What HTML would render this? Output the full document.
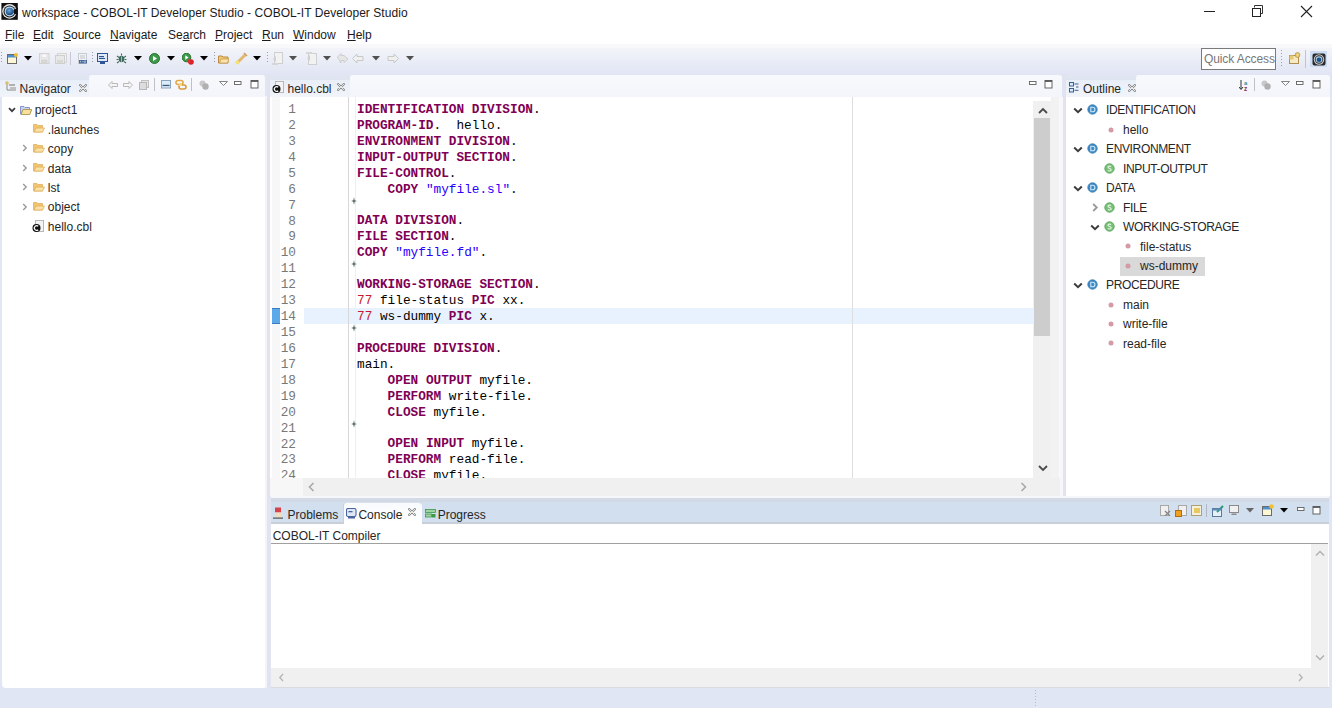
<!DOCTYPE html>
<html><head><meta charset="utf-8">
<style>
*{margin:0;padding:0;box-sizing:border-box}
html,body{width:1332px;height:708px;overflow:hidden}
body{position:relative;background:#e1e6f4;font-family:"Liberation Sans",sans-serif;font-size:12px;color:#1e1e1e}
.a{position:absolute;display:block}
.t{position:absolute;white-space:pre;line-height:16px}
.m{font-family:"Liberation Mono",monospace;font-size:12.75px}
.kw{color:#7f0055;font-weight:bold}
.num{color:#c41a30}
.str{color:#2a00ff}
.ln{color:#787878}
</style></head><body>
<div class="a" style="left:0px;top:0px;width:1332px;height:24px;background:#fff"></div>
<svg class="a" style="left:1px;top:3px" width="17" height="17" viewBox="0 0 17 17"><defs><radialGradient id="bl" cx="0.45" cy="0.35" r="0.7"><stop offset="0" stop-color="#6fa8dc"/><stop offset="1" stop-color="#0f3d70"/></radialGradient></defs><rect x="0.4" y="0" width="16.4" height="16.8" fill="#111"/><circle cx="8.5" cy="8.4" r="7.3" fill="#e6e6e6"/><circle cx="8.5" cy="8.4" r="6" fill="#1a1a1a"/><circle cx="8.6" cy="8.4" r="5" fill="#b9dcf5"/><circle cx="8.6" cy="8.5" r="3.8" fill="url(#bl)"/><path d="M16.8 4.5 L12.5 7 V10 L16.8 12.5 Z" fill="#111"/></svg>
<div class="t" style="left:22px;top:5.04px;font-size:12px;color:#1a1a1a;font-family:'Liberation Sans';font-weight:normal;letter-spacing:0.05px">workspace - COBOL-IT Developer Studio - COBOL-IT Developer Studio</div>
<div class="a" style="left:1204px;top:11px;width:11px;height:1px;background:#222"></div>
<svg class="a" style="left:1250px;top:5px" width="14" height="13" viewBox="0 0 14 13"><path d="M4.5 2.5 V0.5 H12.5 V8.5 H10.5" fill="none" stroke="#333" stroke-width="1"/><rect x="2.5" y="3.5" width="8" height="8" fill="#fff" stroke="#222" stroke-width="1"/></svg>
<svg class="a" style="left:1300px;top:5px" width="13" height="13" viewBox="0 0 13 13"><path d="M1 1 L12 12 M12 1 L1 12" stroke="#222" stroke-width="1.1"/></svg>
<div class="a" style="left:0px;top:24px;width:1332px;height:20px;background:#fff"></div>
<div class="t" style="left:5px;top:27.04px;font-size:12px;color:#1a1a1a;font-family:'Liberation Sans';font-weight:normal;"><span style="text-decoration:underline">F</span>ile</div>
<div class="t" style="left:33px;top:27.04px;font-size:12px;color:#1a1a1a;font-family:'Liberation Sans';font-weight:normal;"><span style="text-decoration:underline">E</span>dit</div>
<div class="t" style="left:63px;top:27.04px;font-size:12px;color:#1a1a1a;font-family:'Liberation Sans';font-weight:normal;"><span style="text-decoration:underline">S</span>ource</div>
<div class="t" style="left:110px;top:27.04px;font-size:12px;color:#1a1a1a;font-family:'Liberation Sans';font-weight:normal;"><span style="text-decoration:underline">N</span>avigate</div>
<div class="t" style="left:168px;top:27.04px;font-size:12px;color:#1a1a1a;font-family:'Liberation Sans';font-weight:normal;">Se<span style="text-decoration:underline">a</span>rch</div>
<div class="t" style="left:215px;top:27.04px;font-size:12px;color:#1a1a1a;font-family:'Liberation Sans';font-weight:normal;"><span style="text-decoration:underline">P</span>roject</div>
<div class="t" style="left:262px;top:27.04px;font-size:12px;color:#1a1a1a;font-family:'Liberation Sans';font-weight:normal;"><span style="text-decoration:underline">R</span>un</div>
<div class="t" style="left:293px;top:27.04px;font-size:12px;color:#1a1a1a;font-family:'Liberation Sans';font-weight:normal;"><span style="text-decoration:underline">W</span>indow</div>
<div class="t" style="left:347px;top:27.04px;font-size:12px;color:#1a1a1a;font-family:'Liberation Sans';font-weight:normal;"><span style="text-decoration:underline">H</span>elp</div>
<div class="a" style="left:0px;top:44px;width:1332px;height:4px;background:#f8f8fb"></div>
<div class="a" style="left:0px;top:48px;width:1332px;height:32px;background:linear-gradient(#f2f4f9,#e2e6f4 80%,#dfe4f1)"></div>
<div class="a" style="left:1px;top:52px;width:1px;height:12px;background:repeating-linear-gradient(#9aa0b0 0 1px,transparent 1px 3px)"></div>
<svg class="a" style="left:7px;top:53px" width="11" height="11" viewBox="0 0 11 11"><rect x="0.5" y="1.5" width="9" height="9" fill="#fdf7d6" stroke="#6b6b6b"/><rect x="1" y="2" width="8" height="2.5" fill="#4d8fd0"/><circle cx="9" cy="2" r="2" fill="#f0c030"/></svg>
<svg class="a" style="left:24px;top:56px" width="8" height="5" viewBox="0 0 8 5"><path d="M0 0 H8 L4.0 4.5 Z" fill="#000"/></svg>
<svg class="a" style="left:39px;top:53px" width="11" height="11" viewBox="0 0 11 11"><rect x="0.5" y="0.5" width="9.5" height="10" fill="#ebebeb" stroke="#d2d2d2"/><rect x="2.5" y="1" width="5.5" height="3.5" fill="#f8f8f8" stroke="#dadada" stroke-width="0.6"/><rect x="2" y="6.5" width="6.5" height="3.5" fill="#d6d6d2"/></svg>
<svg class="a" style="left:55px;top:53px" width="12" height="11" viewBox="0 0 12 11"><rect x="2.5" y="0.5" width="9" height="9" fill="#efefef" stroke="#d4d4d4"/><rect x="0.5" y="2.5" width="9" height="8" fill="#e8e8e8" stroke="#cfcfcf"/><rect x="2" y="7" width="6" height="3" fill="#d8d8d4"/></svg>
<div class="a" style="left:70px;top:52px;width:1px;height:13px;background:#c5c8d2"></div>
<svg class="a" style="left:78px;top:53px" width="10" height="11" viewBox="0 0 10 11"><rect x="0.5" y="0.5" width="8" height="10" fill="#f2f2f4" stroke="#c8ccd4"/><path d="M2 3 H7 M2 5 H7" stroke="#b0b8c0" stroke-width="0.8"/><rect x="1" y="7" width="8" height="3.5" fill="#4a6a9a"/><path d="M2 8.7 H3 M4.5 8.7 H5.5 M7 7.5 V10" stroke="#dfe8f4" stroke-width="0.9"/></svg>
<div class="a" style="left:92px;top:52px;width:1px;height:12px;background:repeating-linear-gradient(#9aa0b0 0 1px,transparent 1px 3px)"></div>
<svg class="a" style="left:97px;top:53px" width="11" height="11" viewBox="0 0 11 11"><rect x="0.5" y="0.5" width="10" height="8" fill="#dfe9f7" stroke="#2f5597"/><rect x="2" y="3" width="5" height="1.2" fill="#2f5597"/><rect x="2" y="5" width="6" height="1" fill="#2f5597"/><rect x="3" y="9" width="5" height="2" fill="#2f5597"/></svg>
<svg class="a" style="left:116px;top:53px" width="11" height="11" viewBox="0 0 11 11"><ellipse cx="5.5" cy="6" rx="2.8" ry="3.3" fill="#3f6a5c"/><path d="M5.5 0.5 V2.5 M1 3 L3 4.5 M10 3 L8 4.5 M0.5 6.5 H2.5 M8.5 6.5 H10.5 M1 10 L3 8.5 M10 10 L8 8.5" stroke="#466e60" stroke-width="1.1"/><path d="M5.5 3.5 V9" stroke="#b8d4c8" stroke-width="0.8"/></svg>
<svg class="a" style="left:134px;top:56px" width="8" height="5" viewBox="0 0 8 5"><path d="M0 0 H8 L4.0 4.5 Z" fill="#000"/></svg>
<svg class="a" style="left:149px;top:53px" width="11" height="11" viewBox="0 0 11 11"><circle cx="5.5" cy="5.5" r="5" fill="#3d9a4a" stroke="#2a6e33"/><path d="M4 3 L8 5.5 L4 8 Z" fill="#fff"/></svg>
<svg class="a" style="left:167px;top:56px" width="8" height="5" viewBox="0 0 8 5"><path d="M0 0 H8 L4.0 4.5 Z" fill="#000"/></svg>
<svg class="a" style="left:182px;top:53px" width="12" height="12" viewBox="0 0 12 12"><circle cx="4.5" cy="4.5" r="4.3" fill="#3d9a4a" stroke="#2a6e33"/><path d="M3.3 2.3 L6.5 4.5 L3.3 6.7 Z" fill="#fff"/><circle cx="9" cy="9" r="2.8" fill="#d8232a"/><rect x="5.5" y="6.5" width="3" height="3" fill="#e03030"/></svg>
<svg class="a" style="left:200px;top:56px" width="8" height="5" viewBox="0 0 8 5"><path d="M0 0 H8 L4.0 4.5 Z" fill="#000"/></svg>
<div class="a" style="left:214px;top:52px;width:1px;height:12px;background:repeating-linear-gradient(#9aa0b0 0 1px,transparent 1px 3px)"></div>
<svg class="a" style="left:218px;top:53px" width="11" height="11" viewBox="0 0 11 11"><path d="M0.5 3 H4 L5 4 H10 V10 H0.5 Z" fill="#f3c77a" stroke="#b98a3a"/><path d="M1.5 10 L3 6 H11 L9.5 10 Z" fill="#fbe3ad" stroke="#c89a4a" stroke-width="0.8"/></svg>
<svg class="a" style="left:235px;top:52px" width="13" height="13" viewBox="0 0 13 13"><path d="M2 11 L10 3" stroke="#e2b870" stroke-width="3"/><circle cx="2.5" cy="10.5" r="2" fill="#f4e07a"/><path d="M9 1 L12 4" stroke="#c89a6a" stroke-width="1.5"/></svg>
<svg class="a" style="left:253px;top:56px" width="8" height="5" viewBox="0 0 8 5"><path d="M0 0 H8 L4.0 4.5 Z" fill="#000"/></svg>
<div class="a" style="left:267px;top:52px;width:1px;height:12px;background:repeating-linear-gradient(#9aa0b0 0 1px,transparent 1px 3px)"></div>
<svg class="a" style="left:272px;top:52px" width="11" height="13" viewBox="0 0 11 13"><rect x="2.5" y="0.5" width="8" height="11" fill="#f2f2f2" stroke="#cfcfcf"/><path d="M1 7 L4 4 L4 10 Z" fill="#d0d0d0"/><rect x="0" y="11" width="6" height="2" fill="#d6d6d6"/></svg>
<svg class="a" style="left:289px;top:56px" width="8" height="5" viewBox="0 0 8 5"><path d="M0 0 H8 L4.0 4.5 Z" fill="#505050"/></svg>
<svg class="a" style="left:306px;top:52px" width="11" height="13" viewBox="0 0 11 13"><rect x="2.5" y="1.5" width="8" height="11" fill="#f2f2f2" stroke="#cfcfcf"/><path d="M1 6 L4 9 L4 3 Z" fill="#d0d0d0"/><rect x="0" y="0" width="6" height="2" fill="#d6d6d6"/></svg>
<svg class="a" style="left:323px;top:56px" width="8" height="5" viewBox="0 0 8 5"><path d="M0 0 H8 L4.0 4.5 Z" fill="#505050"/></svg>
<svg class="a" style="left:337px;top:53px" width="12" height="11" viewBox="0 0 12 11"><path d="M0.5 4 L4 0.5 V2.5 H7 L11 6 L7 9.5 V7.5 H4 V10 Z" fill="#e6e6e6" stroke="#cdcdcd"/></svg>
<svg class="a" style="left:352px;top:53px" width="12" height="11" viewBox="0 0 12 11"><path d="M0.5 5.5 L5 1 V3.5 H11 V7.5 H5 V10 Z" fill="#f0f0f0" stroke="#c8c8c8"/></svg>
<svg class="a" style="left:372px;top:56px" width="8" height="5" viewBox="0 0 8 5"><path d="M0 0 H8 L4.0 4.5 Z" fill="#505050"/></svg>
<svg class="a" style="left:387px;top:53px" width="12" height="11" viewBox="0 0 12 11"><path d="M11.5 5.5 L7 1 V3.5 H1 V7.5 H7 V10 Z" fill="#f0f0f0" stroke="#c8c8c8"/></svg>
<svg class="a" style="left:406px;top:56px" width="8" height="5" viewBox="0 0 8 5"><path d="M0 0 H8 L4.0 4.5 Z" fill="#505050"/></svg>
<div class="a" style="left:1201px;top:48px;width:75px;height:22px;background:#fff;border:1px solid #7a7a7a"></div>
<div class="t" style="left:1204px;top:51.34px;font-size:12px;color:#787878;font-family:'Liberation Sans';font-weight:normal;letter-spacing:-0.1px">Quick Access</div>
<div class="a" style="left:1281px;top:50px;width:1px;height:18px;background:repeating-linear-gradient(#9aa0b0 0 1px,transparent 1px 3px)"></div>
<svg class="a" style="left:1289px;top:52px" width="12" height="12" viewBox="0 0 12 12"><rect x="0.5" y="3.5" width="9" height="8" fill="#f6eac2" stroke="#b09050"/><rect x="0.5" y="3.5" width="4" height="4" fill="#e8c870"/><circle cx="8.5" cy="3" r="2.4" fill="#f0d070" stroke="#b09050" stroke-width="0.8"/></svg>
<div class="a" style="left:1305px;top:50px;width:1px;height:18px;background:#c0c4d0"></div>
<div class="a" style="left:1310px;top:51px;width:17px;height:16px;background:#cddcf2"></div>
<svg class="a" style="left:1311.5px;top:52.5px" width="14" height="13" viewBox="0 0 14 13"><rect x="0.5" y="0.5" width="13" height="12" rx="2" fill="#2a2a2a"/><circle cx="7" cy="6.5" r="5.2" fill="#cfcfcf"/><circle cx="7" cy="6.5" r="4.2" fill="#333"/><circle cx="7" cy="6.5" r="3.3" fill="#a8cdea"/><circle cx="7" cy="6.7" r="2.3" fill="#1d4f86"/></svg>
<div class="a" style="left:2px;top:96px;width:265px;height:592px;background:#fff;border-radius:0 0 4px 4px"></div>
<div class="a" style="left:89px;top:74.5px;width:176px;height:22px;background:linear-gradient(#f7f9fc,#f3f5fb);border-radius:3px 3px 0 0"></div>
<div class="a" style="left:0px;top:79.5px;width:89px;height:17px;background:linear-gradient(#e8eef8,#f1f4fa)"></div>
<svg class="a" style="left:5px;top:81px" width="12" height="11" viewBox="0 0 12 11"><path d="M2 1 V9 H11" fill="none" stroke="#8a8a8a" stroke-width="1"/><rect x="4" y="3" width="6" height="2" fill="#b0b0b0"/><rect x="5" y="6" width="6" height="2" fill="#c0c0c0"/><circle cx="2" cy="2" r="1.8" fill="#d9c06a"/></svg>
<div class="t" style="left:19.5px;top:80.84px;font-size:12px;color:#262626;font-family:'Liberation Sans';font-weight:normal;">Navigator</div>
<svg class="a" style="left:79px;top:83.5px" width="8" height="8" viewBox="0 0 8 8"><path d="M1 1 L7 7 M7 1 L1 7" stroke="#8a8a8a" stroke-width="2.2" stroke-linecap="round"/><path d="M1 1 L7 7 M7 1 L1 7" stroke="#fff" stroke-width="0.8" stroke-linecap="round"/></svg>
<svg class="a" style="left:108px;top:81px" width="10" height="8" viewBox="0 0 10 8"><path d="M0.5 4 L4 0.5 V2.5 H9.5 V5.5 H4 V7.5 Z" fill="#f4f4f4" stroke="#b9b9b9"/></svg>
<svg class="a" style="left:123px;top:81px" width="10" height="8" viewBox="0 0 10 8"><path d="M9.5 4 L6 0.5 V2.5 H0.5 V5.5 H6 V7.5 Z" fill="#f4f4f4" stroke="#b9b9b9"/></svg>
<svg class="a" style="left:139px;top:80px" width="10" height="10" viewBox="0 0 10 10"><rect x="2.5" y="0.5" width="7" height="7" fill="#e6e6e6" stroke="#c0c0c0"/><rect x="0.5" y="2.5" width="7" height="7" fill="#dcdcdc" stroke="#b8b8b8"/></svg>
<div class="a" style="left:154px;top:78px;width:1px;height:13px;background:#c0c0c8"></div>
<svg class="a" style="left:161px;top:80px" width="10" height="9" viewBox="0 0 10 9"><rect x="0.5" y="0.5" width="9" height="7.5" fill="#dcecf8" stroke="#8aa4c0"/><rect x="1.5" y="4.8" width="7" height="1.3" fill="#3a5a7a"/></svg>
<svg class="a" style="left:175px;top:79px" width="12" height="12" viewBox="0 0 12 12"><rect x="1" y="1.5" width="7" height="4" rx="2" fill="none" stroke="#e2a84a" stroke-width="1.6"/><rect x="4" y="6" width="7" height="4" rx="2" fill="none" stroke="#d99a3a" stroke-width="1.6"/><rect x="4" y="4" width="3" height="3" fill="#f4d880"/></svg>
<div class="a" style="left:191px;top:78px;width:1px;height:13px;background:#c0c0c8"></div>
<svg class="a" style="left:199px;top:80px" width="10" height="10" viewBox="0 0 10 10"><circle cx="3.5" cy="3.5" r="3" fill="#c8c8c8"/><circle cx="6.5" cy="6.5" r="3.2" fill="#b0b0b0"/></svg>
<svg class="a" style="left:219px;top:81px" width="9" height="5" viewBox="0 0 9 5"><path d="M0.5 0.5 H8.5 L4.5 4.5 Z" fill="#fff" stroke="#777" stroke-width="0.9"/></svg>
<svg class="a" style="left:234px;top:80.5px" width="9" height="5" viewBox="0 0 9 5"><rect x="0.5" y="0.5" width="6.5" height="3" fill="#fff" stroke="#606060" stroke-width="0.9"/></svg>
<svg class="a" style="left:250px;top:80px" width="9" height="9" viewBox="0 0 9 9"><rect x="1" y="0.5" width="7" height="7.5" fill="#fff" stroke="#555" stroke-width="0.9"/><rect x="1" y="0.5" width="7" height="1.4" fill="#555"/></svg>
<svg class="a" style="left:8px;top:106.9px" width="8" height="6" viewBox="0 0 8 6"><path d="M1 1.2 L4 4.2 L7 1.2" fill="none" stroke="#3a3a3a" stroke-width="1.7"/></svg>
<svg class="a" style="left:20px;top:104.9px" width="12" height="10" viewBox="0 0 12 10"><path d="M0.5 1.5 H4 L5 2.5 H9.5 V9 H0.5 Z" fill="#c9d2ef" stroke="#6f7fb8" stroke-width="0.8"/><path d="M1 9 L3 5 H11.5 L9.5 9 Z" fill="#e6ecfa" stroke="#6f7fb8" stroke-width="0.8"/></svg>
<svg class="a" style="left:20px;top:104.9px" width="12" height="10" viewBox="0 0 12 10"><path d="M1.2 9.5 L3 4.5 H11.5 L9.8 9.5 Z" fill="#f6e29a" stroke="#b49a50" stroke-width="0.9"/></svg>
<div class="t" style="left:34.7px;top:102.24px;font-size:12px;color:#262626;font-family:'Liberation Sans';font-weight:normal;">project1</div>
<svg class="a" style="left:33px;top:123.32px" width="12" height="10" viewBox="0 0 12 10"><path d="M0.5 1.5 H4 L5 2.5 H9.5 V9 H0.5 Z" fill="#f2c46e" stroke="#e0b060" stroke-width="0.8"/><path d="M1 9 L3 5 H11.5 L9.5 9 Z" fill="#fae2a6" stroke="#e0b060" stroke-width="0.8"/></svg>
<div class="t" style="left:47.8px;top:121.66px;font-size:12px;color:#262626;font-family:'Liberation Sans';font-weight:normal;">.launches</div>
<svg class="a" style="left:22px;top:144.24px" width="6" height="8" viewBox="0 0 6 8"><path d="M1.2 1 L4.2 4 L1.2 7" fill="none" stroke="#9a9a9a" stroke-width="1.4"/></svg>
<svg class="a" style="left:33px;top:142.74px" width="12" height="10" viewBox="0 0 12 10"><path d="M0.5 1.5 H4 L5 2.5 H9.5 V9 H0.5 Z" fill="#f2c46e" stroke="#e0b060" stroke-width="0.8"/><path d="M1 9 L3 5 H11.5 L9.5 9 Z" fill="#fae2a6" stroke="#e0b060" stroke-width="0.8"/></svg>
<div class="t" style="left:47.8px;top:141.08px;font-size:12px;color:#262626;font-family:'Liberation Sans';font-weight:normal;">copy</div>
<svg class="a" style="left:22px;top:163.66000000000003px" width="6" height="8" viewBox="0 0 6 8"><path d="M1.2 1 L4.2 4 L1.2 7" fill="none" stroke="#9a9a9a" stroke-width="1.4"/></svg>
<svg class="a" style="left:33px;top:162.16000000000003px" width="12" height="10" viewBox="0 0 12 10"><path d="M0.5 1.5 H4 L5 2.5 H9.5 V9 H0.5 Z" fill="#f2c46e" stroke="#e0b060" stroke-width="0.8"/><path d="M1 9 L3 5 H11.5 L9.5 9 Z" fill="#fae2a6" stroke="#e0b060" stroke-width="0.8"/></svg>
<div class="t" style="left:47.8px;top:160.50px;font-size:12px;color:#262626;font-family:'Liberation Sans';font-weight:normal;">data</div>
<svg class="a" style="left:22px;top:183.08px" width="6" height="8" viewBox="0 0 6 8"><path d="M1.2 1 L4.2 4 L1.2 7" fill="none" stroke="#9a9a9a" stroke-width="1.4"/></svg>
<svg class="a" style="left:33px;top:181.58px" width="12" height="10" viewBox="0 0 12 10"><path d="M0.5 1.5 H4 L5 2.5 H9.5 V9 H0.5 Z" fill="#f2c46e" stroke="#e0b060" stroke-width="0.8"/><path d="M1 9 L3 5 H11.5 L9.5 9 Z" fill="#fae2a6" stroke="#e0b060" stroke-width="0.8"/></svg>
<div class="t" style="left:47.8px;top:179.92px;font-size:12px;color:#262626;font-family:'Liberation Sans';font-weight:normal;">lst</div>
<svg class="a" style="left:22px;top:202.5px" width="6" height="8" viewBox="0 0 6 8"><path d="M1.2 1 L4.2 4 L1.2 7" fill="none" stroke="#9a9a9a" stroke-width="1.4"/></svg>
<svg class="a" style="left:33px;top:201.0px" width="12" height="10" viewBox="0 0 12 10"><path d="M0.5 1.5 H4 L5 2.5 H9.5 V9 H0.5 Z" fill="#f2c46e" stroke="#e0b060" stroke-width="0.8"/><path d="M1 9 L3 5 H11.5 L9.5 9 Z" fill="#fae2a6" stroke="#e0b060" stroke-width="0.8"/></svg>
<div class="t" style="left:47.8px;top:199.34px;font-size:12px;color:#262626;font-family:'Liberation Sans';font-weight:normal;">object</div>
<svg class="a" style="left:32px;top:220.42000000000002px" width="12" height="13" viewBox="0 0 12 13"><rect x="3.5" y="0.5" width="8" height="11" fill="#f4f4f4" stroke="#b8b8b8"/><circle cx="4.5" cy="8" r="4" fill="#111"/><path d="M6.2 6.3 A2.3 2.3 0 1 0 6.2 9.7" fill="none" stroke="#fff" stroke-width="1.2"/></svg>
<div class="t" style="left:47.8px;top:218.76px;font-size:12px;color:#262626;font-family:'Liberation Sans';font-weight:normal;">hello.cbl</div>
<div class="a" style="left:270px;top:97px;width:792px;height:399px;background:#fff"></div>
<div class="a" style="left:350px;top:74.5px;width:712px;height:22.5px;background:linear-gradient(#f7f9fc,#f3f5fb);border-radius:3px 3px 0 0"></div>
<div class="a" style="left:270px;top:79.5px;width:80px;height:17.5px;background:linear-gradient(#e9eef7,#f1f4fa)"></div>
<svg class="a" style="left:272px;top:81px" width="12" height="13" viewBox="0 0 12 13"><rect x="3.5" y="0.5" width="8" height="11" fill="#f4f4f4" stroke="#b8b8b8"/><circle cx="4.5" cy="8" r="4" fill="#111"/><path d="M6.2 6.3 A2.3 2.3 0 1 0 6.2 9.7" fill="none" stroke="#fff" stroke-width="1.2"/></svg>
<div class="t" style="left:287.5px;top:81.04px;font-size:12px;color:#262626;font-family:'Liberation Sans';font-weight:normal;">hello.cbl</div>
<svg class="a" style="left:337px;top:83px" width="8" height="8" viewBox="0 0 8 8"><path d="M1 1 L7 7 M7 1 L1 7" stroke="#8a8a8a" stroke-width="2.2" stroke-linecap="round"/><path d="M1 1 L7 7 M7 1 L1 7" stroke="#fff" stroke-width="0.8" stroke-linecap="round"/></svg>
<svg class="a" style="left:1029px;top:80.5px" width="9" height="5" viewBox="0 0 9 5"><rect x="0.5" y="0.5" width="6.5" height="3" fill="#fff" stroke="#606060" stroke-width="0.9"/></svg>
<svg class="a" style="left:1044px;top:80px" width="9" height="9" viewBox="0 0 9 9"><rect x="1" y="0.5" width="7" height="7.5" fill="#fff" stroke="#555" stroke-width="0.9"/><rect x="1" y="0.5" width="7" height="1.4" fill="#555"/></svg>
<div class="a" style="left:270px;top:97px;width:764px;height:381px;background:#fff"></div>
<div class="a" style="left:271.5px;top:97px;width:8.5px;height:381px;background:#f7f7f7"></div>
<div class="a" style="left:303.8px;top:308px;width:729.2px;height:16px;background:#e8f2fe"></div>
<div class="a" style="left:852px;top:97px;width:1px;height:381px;background:#dedede"></div>
<div class="a" style="left:348px;top:97px;width:1px;height:381px;background:#d8d8d8"></div>
<div class="a" style="left:355px;top:97px;width:1px;height:381px;background:#f0f0f0"></div>
<div class="a" style="left:272px;top:308px;width:8px;height:16px;background:#5ba9e8;border-top:1px solid #3d7cc0;border-bottom:1px solid #3d7cc0"></div>
<div class="a" style="left:270px;top:97px;width:764px;height:381px;overflow:hidden">
<div class="t ln" style="left:0;width:26px;text-align:right;top:5.00px;font-family:'Liberation Mono';font-size:12.75px">1</div>
<div class="t m" style="left:87.00px;top:4.90px;color:#000"><span class="kw">IDENTIFICATION DIVISION</span>.</div>
<div class="t ln" style="left:0;width:26px;text-align:right;top:20.93px;font-family:'Liberation Mono';font-size:12.75px">2</div>
<div class="t m" style="left:87.00px;top:20.83px;color:#000"><span class="kw">PROGRAM-ID</span>.  hello.</div>
<div class="t ln" style="left:0;width:26px;text-align:right;top:36.86px;font-family:'Liberation Mono';font-size:12.75px">3</div>
<div class="t m" style="left:87.00px;top:36.76px;color:#000"><span class="kw">ENVIRONMENT DIVISION</span>.</div>
<div class="t ln" style="left:0;width:26px;text-align:right;top:52.79px;font-family:'Liberation Mono';font-size:12.75px">4</div>
<div class="t m" style="left:87.00px;top:52.69px;color:#000"><span class="kw">INPUT-OUTPUT SECTION</span>.</div>
<div class="t ln" style="left:0;width:26px;text-align:right;top:68.72px;font-family:'Liberation Mono';font-size:12.75px">5</div>
<div class="t m" style="left:87.00px;top:68.62px;color:#000"><span class="kw">FILE-CONTROL</span>.</div>
<div class="t ln" style="left:0;width:26px;text-align:right;top:84.65px;font-family:'Liberation Mono';font-size:12.75px">6</div>
<div class="t m" style="left:87.00px;top:84.55px;color:#000">    <span class="kw">COPY</span> <span class="str">"myfile.sl"</span>.</div>
<div class="t ln" style="left:0;width:26px;text-align:right;top:100.58px;font-family:'Liberation Mono';font-size:12.75px">7</div>
<svg class="a" style="left:80.5px;top:99.58px" width="6" height="8" viewBox="0 0 6 8"><path d="M3 0.2 L3.7 3.3 L5.8 4 L3.7 4.7 L3 7.8 L2.3 4.7 L0.2 4 L2.3 3.3 Z" fill="#56685c"/></svg>
<div class="t ln" style="left:0;width:26px;text-align:right;top:116.51px;font-family:'Liberation Mono';font-size:12.75px">8</div>
<div class="t m" style="left:87.00px;top:116.41px;color:#000"><span class="kw">DATA DIVISION</span>.</div>
<div class="t ln" style="left:0;width:26px;text-align:right;top:132.44px;font-family:'Liberation Mono';font-size:12.75px">9</div>
<div class="t m" style="left:87.00px;top:132.34px;color:#000"><span class="kw">FILE SECTION</span>.</div>
<div class="t ln" style="left:0;width:26px;text-align:right;top:148.37px;font-family:'Liberation Mono';font-size:12.75px">10</div>
<div class="t m" style="left:87.00px;top:148.27px;color:#000"><span class="kw">COPY</span> <span class="str">"myfile.fd"</span>.</div>
<div class="t ln" style="left:0;width:26px;text-align:right;top:164.30px;font-family:'Liberation Mono';font-size:12.75px">11</div>
<svg class="a" style="left:80.5px;top:163.30px" width="6" height="8" viewBox="0 0 6 8"><path d="M3 0.2 L3.7 3.3 L5.8 4 L3.7 4.7 L3 7.8 L2.3 4.7 L0.2 4 L2.3 3.3 Z" fill="#56685c"/></svg>
<div class="t ln" style="left:0;width:26px;text-align:right;top:180.23px;font-family:'Liberation Mono';font-size:12.75px">12</div>
<div class="t m" style="left:87.00px;top:180.13px;color:#000"><span class="kw">WORKING-STORAGE SECTION</span>.</div>
<div class="t ln" style="left:0;width:26px;text-align:right;top:196.16px;font-family:'Liberation Mono';font-size:12.75px">13</div>
<div class="t m" style="left:87.00px;top:196.06px;color:#000"><span class="num">77</span> file-status <span class="kw">PIC</span> xx.</div>
<div class="t ln" style="left:0;width:26px;text-align:right;top:212.09px;font-family:'Liberation Mono';font-size:12.75px">14</div>
<div class="t m" style="left:87.00px;top:211.99px;color:#000"><span class="num">77</span> ws-dummy <span class="kw">PIC</span> x.</div>
<div class="t ln" style="left:0;width:26px;text-align:right;top:228.02px;font-family:'Liberation Mono';font-size:12.75px">15</div>
<svg class="a" style="left:80.5px;top:227.02px" width="6" height="8" viewBox="0 0 6 8"><path d="M3 0.2 L3.7 3.3 L5.8 4 L3.7 4.7 L3 7.8 L2.3 4.7 L0.2 4 L2.3 3.3 Z" fill="#56685c"/></svg>
<div class="t ln" style="left:0;width:26px;text-align:right;top:243.95px;font-family:'Liberation Mono';font-size:12.75px">16</div>
<div class="t m" style="left:87.00px;top:243.85px;color:#000"><span class="kw">PROCEDURE DIVISION</span>.</div>
<div class="t ln" style="left:0;width:26px;text-align:right;top:259.88px;font-family:'Liberation Mono';font-size:12.75px">17</div>
<div class="t m" style="left:87.00px;top:259.78px;color:#000">main.</div>
<div class="t ln" style="left:0;width:26px;text-align:right;top:275.81px;font-family:'Liberation Mono';font-size:12.75px">18</div>
<div class="t m" style="left:87.00px;top:275.71px;color:#000">    <span class="kw">OPEN</span> <span class="kw">OUTPUT</span> myfile.</div>
<div class="t ln" style="left:0;width:26px;text-align:right;top:291.74px;font-family:'Liberation Mono';font-size:12.75px">19</div>
<div class="t m" style="left:87.00px;top:291.64px;color:#000">    <span class="kw">PERFORM</span> write-file.</div>
<div class="t ln" style="left:0;width:26px;text-align:right;top:307.67px;font-family:'Liberation Mono';font-size:12.75px">20</div>
<div class="t m" style="left:87.00px;top:307.57px;color:#000">    <span class="kw">CLOSE</span> myfile.</div>
<div class="t ln" style="left:0;width:26px;text-align:right;top:323.60px;font-family:'Liberation Mono';font-size:12.75px">21</div>
<svg class="a" style="left:80.5px;top:322.60px" width="6" height="8" viewBox="0 0 6 8"><path d="M3 0.2 L3.7 3.3 L5.8 4 L3.7 4.7 L3 7.8 L2.3 4.7 L0.2 4 L2.3 3.3 Z" fill="#56685c"/></svg>
<div class="t ln" style="left:0;width:26px;text-align:right;top:339.53px;font-family:'Liberation Mono';font-size:12.75px">22</div>
<div class="t m" style="left:87.00px;top:339.43px;color:#000">    <span class="kw">OPEN</span> <span class="kw">INPUT</span> myfile.</div>
<div class="t ln" style="left:0;width:26px;text-align:right;top:355.46px;font-family:'Liberation Mono';font-size:12.75px">23</div>
<div class="t m" style="left:87.00px;top:355.36px;color:#000">    <span class="kw">PERFORM</span> read-file.</div>
<div class="t ln" style="left:0;width:26px;text-align:right;top:371.39px;font-family:'Liberation Mono';font-size:12.75px">24</div>
<div class="t m" style="left:87.00px;top:371.29px;color:#000">    <span class="kw">CLOSE</span> myfile.</div>
</div>
<div class="a" style="left:1033px;top:101px;width:18px;height:377px;background:#f0f0f0"></div>
<div class="a" style="left:1034px;top:118px;width:16px;height:218px;background:#cdcdcd"></div>
<svg class="a" style="left:1038px;top:106.5px" width="10" height="7" viewBox="0 0 10 7"><path d="M1 6 L5 2 L9 6" fill="none" stroke="#4a4a4a" stroke-width="1.8"/></svg>
<svg class="a" style="left:1038px;top:464.5px" width="10" height="7" viewBox="0 0 10 7"><path d="M1 1 L5 5 L9 1" fill="none" stroke="#4a4a4a" stroke-width="1.8"/></svg>
<div class="a" style="left:1051px;top:97px;width:8px;height:399px;background:#f2f2f2"></div>
<div class="a" style="left:1059px;top:97px;width:3px;height:399px;background:#f9f9fb"></div>
<div class="a" style="left:270px;top:478px;width:33px;height:18px;background:#f7f7f7"></div>
<div class="a" style="left:303px;top:478px;width:730px;height:18px;background:#f0f0f0"></div>
<svg class="a" style="left:308px;top:482px" width="7" height="10" viewBox="0 0 7 10"><path d="M5.5 1 L1.5 5 L5.5 9" fill="none" stroke="#a6a6a6" stroke-width="1.5"/></svg>
<svg class="a" style="left:1020px;top:482px" width="7" height="10" viewBox="0 0 7 10"><path d="M1.5 1 L5.5 5 L1.5 9" fill="none" stroke="#a6a6a6" stroke-width="1.5"/></svg>
<div class="a" style="left:1033px;top:478px;width:29px;height:18px;background:#f0f0f0"></div>
<div class="a" style="left:1066px;top:96px;width:264px;height:400px;background:#fff"></div>
<div class="a" style="left:1136px;top:74.5px;width:194px;height:22px;background:linear-gradient(#f7f9fc,#f3f5fb);border-radius:3px 3px 0 0"></div>
<div class="a" style="left:1064px;top:79.5px;width:72px;height:17px;background:linear-gradient(#e8eef8,#f1f4fa)"></div>
<svg class="a" style="left:1069px;top:82px" width="11" height="11" viewBox="0 0 11 11"><rect x="0.5" y="0.5" width="4" height="3.5" fill="#d8ecf8" stroke="#3d5f8f"/><rect x="0.5" y="6.5" width="4" height="3.5" fill="#d8ecf8" stroke="#3d5f8f"/><path d="M5.5 2 H9.5 M7 5 H9.5 M5.5 8.3 H9.5" stroke="#3d5f8f" stroke-width="1"/></svg>
<div class="t" style="left:1083px;top:80.84px;font-size:12px;color:#262626;font-family:'Liberation Sans';font-weight:normal;">Outline</div>
<svg class="a" style="left:1128px;top:83.5px" width="8" height="8" viewBox="0 0 8 8"><path d="M1 1 L7 7 M7 1 L1 7" stroke="#8a8a8a" stroke-width="2.2" stroke-linecap="round"/><path d="M1 1 L7 7 M7 1 L1 7" stroke="#fff" stroke-width="0.8" stroke-linecap="round"/></svg>
<svg class="a" style="left:1239px;top:79px" width="12" height="12" viewBox="0 0 12 12"><path d="M2 1 V10 M0 8 L2 10.5 L4 8" fill="none" stroke="#333" stroke-width="1"/><text x="5" y="6" font-size="6" font-family="Liberation Sans" font-weight="bold" fill="#3a8aa0">a</text><text x="5" y="11.5" font-size="6.5" font-family="Liberation Sans" font-weight="bold" fill="#8a3060">z</text></svg>
<div class="a" style="left:1254px;top:78px;width:1px;height:13px;background:#c0c0c8"></div>
<svg class="a" style="left:1261px;top:80px" width="10" height="10" viewBox="0 0 10 10"><circle cx="3.5" cy="3.5" r="3" fill="#c8c8c8"/><circle cx="6.5" cy="6.5" r="3.2" fill="#b0b0b0"/></svg>
<svg class="a" style="left:1281px;top:81px" width="9" height="5" viewBox="0 0 9 5"><path d="M0.5 0.5 H8.5 L4.5 4.5 Z" fill="#fff" stroke="#777" stroke-width="0.9"/></svg>
<svg class="a" style="left:1296px;top:80.5px" width="9" height="5" viewBox="0 0 9 5"><rect x="0.5" y="0.5" width="6.5" height="3" fill="#fff" stroke="#606060" stroke-width="0.9"/></svg>
<svg class="a" style="left:1312px;top:80px" width="9" height="9" viewBox="0 0 9 9"><rect x="1" y="0.5" width="7" height="7.5" fill="#fff" stroke="#555" stroke-width="0.9"/><rect x="1" y="0.5" width="7" height="1.4" fill="#555"/></svg>
<svg class="a" style="left:1073px;top:107.1px" width="10" height="7" viewBox="0 0 10 7"><path d="M1.2 1.5 L5 5.2 L8.8 1.5" fill="none" stroke="#3c3c3c" stroke-width="2"/></svg>
<svg class="a" style="left:1086.8px;top:104.3px" width="11" height="11" viewBox="0 0 11 11"><circle cx="5.5" cy="5.5" r="4.7" fill="#3d8bc6" stroke="#2f78b0" stroke-width="0.8"/><path d="M3.8 3.2 H5.6 A2.3 2.3 0 0 1 5.6 7.8 H3.8 Z" fill="none" stroke="#cfe6f6" stroke-width="1.1"/></svg>
<div class="t" style="left:1106px;top:102.44px;font-size:12px;color:#262626;font-family:'Liberation Sans';font-weight:normal;letter-spacing:-0.35px">IDENTIFICATION</div>
<svg class="a" style="left:1107.5px;top:126.53999999999999px" width="6" height="6" viewBox="0 0 6 6"><circle cx="3" cy="3" r="2.5" fill="#d49aa6"/></svg>
<div class="t" style="left:1123px;top:121.88px;font-size:12px;color:#262626;font-family:'Liberation Sans';font-weight:normal;">hello</div>
<svg class="a" style="left:1073px;top:145.98px" width="10" height="7" viewBox="0 0 10 7"><path d="M1.2 1.5 L5 5.2 L8.8 1.5" fill="none" stroke="#3c3c3c" stroke-width="2"/></svg>
<svg class="a" style="left:1086.8px;top:143.17999999999998px" width="11" height="11" viewBox="0 0 11 11"><circle cx="5.5" cy="5.5" r="4.7" fill="#3d8bc6" stroke="#2f78b0" stroke-width="0.8"/><path d="M3.8 3.2 H5.6 A2.3 2.3 0 0 1 5.6 7.8 H3.8 Z" fill="none" stroke="#cfe6f6" stroke-width="1.1"/></svg>
<div class="t" style="left:1106px;top:141.32px;font-size:12px;color:#262626;font-family:'Liberation Sans';font-weight:normal;letter-spacing:-0.35px">ENVIRONMENT</div>
<svg class="a" style="left:1103.8px;top:162.62px" width="11" height="11" viewBox="0 0 11 11"><circle cx="5.5" cy="5.5" r="4.7" fill="#78c278" stroke="#4e9c4e" stroke-width="0.8"/><path d="M7 3.6 C6.2 2.8 4 2.9 4 4.3 C4 5.8 7.2 5.2 7.2 6.8 C7.2 8.2 4.8 8.3 3.9 7.4" fill="none" stroke="#e4f4e4" stroke-width="1.1"/></svg>
<div class="t" style="left:1123px;top:160.76px;font-size:12px;color:#262626;font-family:'Liberation Sans';font-weight:normal;letter-spacing:-0.35px">INPUT-OUTPUT</div>
<svg class="a" style="left:1073px;top:184.86px" width="10" height="7" viewBox="0 0 10 7"><path d="M1.2 1.5 L5 5.2 L8.8 1.5" fill="none" stroke="#3c3c3c" stroke-width="2"/></svg>
<svg class="a" style="left:1086.8px;top:182.06px" width="11" height="11" viewBox="0 0 11 11"><circle cx="5.5" cy="5.5" r="4.7" fill="#3d8bc6" stroke="#2f78b0" stroke-width="0.8"/><path d="M3.8 3.2 H5.6 A2.3 2.3 0 0 1 5.6 7.8 H3.8 Z" fill="none" stroke="#cfe6f6" stroke-width="1.1"/></svg>
<div class="t" style="left:1106px;top:180.20px;font-size:12px;color:#262626;font-family:'Liberation Sans';font-weight:normal;letter-spacing:-0.35px">DATA</div>
<svg class="a" style="left:1092px;top:202.8px" width="7" height="9" viewBox="0 0 7 9"><path d="M1.2 1 L4.8 4.5 L1.2 8" fill="none" stroke="#9a9a9a" stroke-width="1.8"/></svg>
<svg class="a" style="left:1103.8px;top:201.5px" width="11" height="11" viewBox="0 0 11 11"><circle cx="5.5" cy="5.5" r="4.7" fill="#78c278" stroke="#4e9c4e" stroke-width="0.8"/><path d="M7 3.6 C6.2 2.8 4 2.9 4 4.3 C4 5.8 7.2 5.2 7.2 6.8 C7.2 8.2 4.8 8.3 3.9 7.4" fill="none" stroke="#e4f4e4" stroke-width="1.1"/></svg>
<div class="t" style="left:1123px;top:199.64px;font-size:12px;color:#262626;font-family:'Liberation Sans';font-weight:normal;letter-spacing:-0.35px">FILE</div>
<svg class="a" style="left:1090px;top:223.74px" width="10" height="7" viewBox="0 0 10 7"><path d="M1.2 1.5 L5 5.2 L8.8 1.5" fill="none" stroke="#3c3c3c" stroke-width="2"/></svg>
<svg class="a" style="left:1103.8px;top:220.94px" width="11" height="11" viewBox="0 0 11 11"><circle cx="5.5" cy="5.5" r="4.7" fill="#78c278" stroke="#4e9c4e" stroke-width="0.8"/><path d="M7 3.6 C6.2 2.8 4 2.9 4 4.3 C4 5.8 7.2 5.2 7.2 6.8 C7.2 8.2 4.8 8.3 3.9 7.4" fill="none" stroke="#e4f4e4" stroke-width="1.1"/></svg>
<div class="t" style="left:1123px;top:219.08px;font-size:12px;color:#262626;font-family:'Liberation Sans';font-weight:normal;letter-spacing:-0.35px">WORKING-STORAGE</div>
<svg class="a" style="left:1124.5px;top:243.18px" width="6" height="6" viewBox="0 0 6 6"><circle cx="3" cy="3" r="2.5" fill="#d49aa6"/></svg>
<div class="t" style="left:1140px;top:238.52px;font-size:12px;color:#262626;font-family:'Liberation Sans';font-weight:normal;">file-status</div>
<div class="a" style="left:1120px;top:256.62px;width:85px;height:19px;background:#d9d9d9"></div>
<svg class="a" style="left:1124.5px;top:262.62px" width="6" height="6" viewBox="0 0 6 6"><circle cx="3" cy="3" r="2.5" fill="#d49aa6"/></svg>
<div class="t" style="left:1140px;top:257.96px;font-size:12px;color:#262626;font-family:'Liberation Sans';font-weight:normal;">ws-dummy</div>
<svg class="a" style="left:1073px;top:282.06px" width="10" height="7" viewBox="0 0 10 7"><path d="M1.2 1.5 L5 5.2 L8.8 1.5" fill="none" stroke="#3c3c3c" stroke-width="2"/></svg>
<svg class="a" style="left:1086.8px;top:279.26px" width="11" height="11" viewBox="0 0 11 11"><circle cx="5.5" cy="5.5" r="4.7" fill="#3d8bc6" stroke="#2f78b0" stroke-width="0.8"/><path d="M3.8 3.2 H5.6 A2.3 2.3 0 0 1 5.6 7.8 H3.8 Z" fill="none" stroke="#cfe6f6" stroke-width="1.1"/></svg>
<div class="t" style="left:1106px;top:277.40px;font-size:12px;color:#262626;font-family:'Liberation Sans';font-weight:normal;letter-spacing:-0.35px">PROCEDURE</div>
<svg class="a" style="left:1107.5px;top:301.5px" width="6" height="6" viewBox="0 0 6 6"><circle cx="3" cy="3" r="2.5" fill="#d49aa6"/></svg>
<div class="t" style="left:1123px;top:296.84px;font-size:12px;color:#262626;font-family:'Liberation Sans';font-weight:normal;">main</div>
<svg class="a" style="left:1107.5px;top:320.94px" width="6" height="6" viewBox="0 0 6 6"><circle cx="3" cy="3" r="2.5" fill="#d49aa6"/></svg>
<div class="t" style="left:1123px;top:316.28px;font-size:12px;color:#262626;font-family:'Liberation Sans';font-weight:normal;">write-file</div>
<svg class="a" style="left:1107.5px;top:340.38px" width="6" height="6" viewBox="0 0 6 6"><circle cx="3" cy="3" r="2.5" fill="#d49aa6"/></svg>
<div class="t" style="left:1123px;top:335.72px;font-size:12px;color:#262626;font-family:'Liberation Sans';font-weight:normal;">read-file</div>
<div class="a" style="left:271px;top:496px;width:1058px;height:192px;background:#fff"></div>
<div class="a" style="left:271px;top:496px;width:1058px;height:2px;background:#f6f7fb"></div>
<div class="a" style="left:271px;top:498px;width:1058px;height:3.5px;background:linear-gradient(#d6dbe4,#cfd8e6)"></div>
<div class="a" style="left:271px;top:501.5px;width:1058px;height:20.5px;background:#d1dfee"></div>
<div class="a" style="left:271px;top:522px;width:1058px;height:1.5px;background:#c9cfd9"></div>
<svg class="a" style="left:273px;top:507px" width="11" height="12" viewBox="0 0 11 12"><rect x="2" y="0.5" width="6" height="5" fill="#d8404a"/><rect x="2" y="5.5" width="6" height="5" fill="#f0dcc0"/><rect x="0" y="10.5" width="10" height="1.2" fill="#555"/></svg>
<div class="t" style="left:287.5px;top:506.84px;font-size:12px;color:#262626;font-family:'Liberation Sans';font-weight:normal;">Problems</div>
<div class="a" style="left:342.5px;top:501.5px;width:79px;height:22.5px;background:linear-gradient(#f8fafd,#fff);border-radius:4px 4px 0 0;border-left:1px solid #c8d0dc;border-top:1px solid #dde3ec"></div>
<svg class="a" style="left:346px;top:507.5px" width="11" height="11" viewBox="0 0 11 11"><rect x="0.5" y="0.5" width="9.5" height="8" rx="1.5" fill="#e0e8f6" stroke="#4a64a0" stroke-width="1.1"/><rect x="2.5" y="3" width="4" height="1.3" fill="#4a64a0"/><rect x="2" y="9" width="7" height="1.5" fill="#4a64a0"/></svg>
<div class="t" style="left:358.4px;top:506.84px;font-size:12px;color:#262626;font-family:'Liberation Sans';font-weight:normal;">Console</div>
<svg class="a" style="left:408px;top:508px" width="8" height="8" viewBox="0 0 8 8"><path d="M1 1 L7 7 M7 1 L1 7" stroke="#8a8a8a" stroke-width="2.2" stroke-linecap="round"/><path d="M1 1 L7 7 M7 1 L1 7" stroke="#fff" stroke-width="0.8" stroke-linecap="round"/></svg>
<svg class="a" style="left:425px;top:509px" width="11" height="9" viewBox="0 0 11 9"><rect x="0.5" y="0.5" width="10" height="3" fill="#9fd4a0" stroke="#3a9a4a" stroke-width="0.8"/><rect x="0.5" y="5" width="6" height="3" fill="#9fd4a0" stroke="#3a9a4a" stroke-width="0.8"/><rect x="7" y="5" width="3.5" height="3.5" fill="#3a9a4a"/></svg>
<div class="t" style="left:437.7px;top:506.84px;font-size:12px;color:#262626;font-family:'Liberation Sans';font-weight:normal;">Progress</div>
<svg class="a" style="left:1160px;top:505px" width="11" height="11" viewBox="0 0 11 11"><rect x="0.5" y="0.5" width="8" height="10" fill="#f0f0f0" stroke="#a8a8a8"/><path d="M5 6 L10 11 M10 6 L5 11" stroke="#888" stroke-width="1.4"/></svg>
<svg class="a" style="left:1175px;top:505px" width="12" height="12" viewBox="0 0 12 12"><rect x="3.5" y="0.5" width="8" height="10" fill="#f0f0f0" stroke="#a8a8a8"/><rect x="0.5" y="5.5" width="6" height="6" fill="#f0a020" stroke="#b07010"/></svg>
<svg class="a" style="left:1191px;top:505px" width="12" height="11" viewBox="0 0 12 11"><rect x="0.5" y="0.5" width="10" height="10" fill="#f4f0dc" stroke="#b0a070"/><rect x="3" y="3" width="6" height="5" fill="#e8c860"/></svg>
<div class="a" style="left:1206px;top:504px;width:1px;height:13px;background:#b0b8c8"></div>
<svg class="a" style="left:1212px;top:505px" width="12" height="12" viewBox="0 0 12 12"><rect x="0.5" y="3.5" width="9" height="8" fill="#e6f0f8" stroke="#5a7a9a"/><path d="M5 7 L11 1" stroke="#2a9a7a" stroke-width="2"/><rect x="0.5" y="3.5" width="9" height="2" fill="#5a8ab8"/></svg>
<svg class="a" style="left:1229px;top:505px" width="10" height="10" viewBox="0 0 10 10"><rect x="0.5" y="0.5" width="9" height="7" fill="#f0f0f0" stroke="#8a8a8a"/><rect x="2.5" y="8.5" width="5" height="1.5" fill="#8a8a8a"/></svg>
<svg class="a" style="left:1246px;top:508px" width="8" height="5" viewBox="0 0 8 5"><path d="M0 0 H8 L4.0 4.5 Z" fill="#666"/></svg>
<svg class="a" style="left:1262px;top:504px" width="12" height="12" viewBox="0 0 12 12"><rect x="0.5" y="2.5" width="9" height="9" fill="#fdf7d6" stroke="#6b6b6b"/><rect x="1" y="3" width="8" height="2.5" fill="#4d8fd0"/><circle cx="9.5" cy="2.5" r="2.2" fill="#f0c030"/></svg>
<svg class="a" style="left:1280px;top:508px" width="8" height="5" viewBox="0 0 8 5"><path d="M0 0 H8 L4.0 4.5 Z" fill="#000"/></svg>
<svg class="a" style="left:1297px;top:506.5px" width="9" height="5" viewBox="0 0 9 5"><rect x="0.5" y="0.5" width="6.5" height="3" fill="#fff" stroke="#606060" stroke-width="0.9"/></svg>
<svg class="a" style="left:1312px;top:506px" width="9" height="9" viewBox="0 0 9 9"><rect x="1" y="0.5" width="7" height="7.5" fill="#fff" stroke="#555" stroke-width="0.9"/><rect x="1" y="0.5" width="7" height="1.4" fill="#555"/></svg>
<div class="t" style="left:272.7px;top:527.54px;font-size:12px;color:#262626;font-family:'Liberation Sans';font-weight:normal;">COBOL-IT Compiler</div>
<div class="a" style="left:271px;top:543px;width:1057px;height:1px;background:#a0a0a0"></div>
<div class="a" style="left:1311px;top:544px;width:17px;height:124px;background:#f0f0f0"></div>
<svg class="a" style="left:1315px;top:550px" width="10" height="6" viewBox="0 0 10 6"><path d="M1 5.5 L5 1.5 L9 5.5" fill="none" stroke="#b0b0b0" stroke-width="1.4"/></svg>
<svg class="a" style="left:1315px;top:655px" width="10" height="6" viewBox="0 0 10 6"><path d="M1 0.5 L5 4.5 L9 0.5" fill="none" stroke="#b0b0b0" stroke-width="1.4"/></svg>
<div class="a" style="left:271px;top:668px;width:1057px;height:20px;background:#f0f0f0"></div>
<svg class="a" style="left:278px;top:673px" width="7" height="9" viewBox="0 0 7 9"><path d="M5 1 L1.8 4.5 L5 8" fill="none" stroke="#b4b4b4" stroke-width="1.3"/></svg>
<svg class="a" style="left:1297px;top:673px" width="7" height="9" viewBox="0 0 7 9"><path d="M2 1 L5.2 4.5 L2 8" fill="none" stroke="#b4b4b4" stroke-width="1.3"/></svg>
<div class="a" style="left:265px;top:96px;width:2px;height:592px;background:#f3f3f9"></div>
<div class="a" style="left:267px;top:74px;width:3px;height:614px;background:#e3e2ee"></div>
<div class="a" style="left:1060px;top:97px;width:2.5px;height:399px;background:#f6f6fb"></div>
<div class="a" style="left:1063px;top:74px;width:2.5px;height:422px;background:#e3e2ee"></div>
<div class="a" style="left:271px;top:687px;width:1058px;height:1px;background:#d9d9de"></div>
<div class="a" style="left:1035px;top:690px;width:1px;height:18px;background:repeating-linear-gradient(#b4b8c8 0 1px,transparent 1px 3px)"></div>
</body></html>
